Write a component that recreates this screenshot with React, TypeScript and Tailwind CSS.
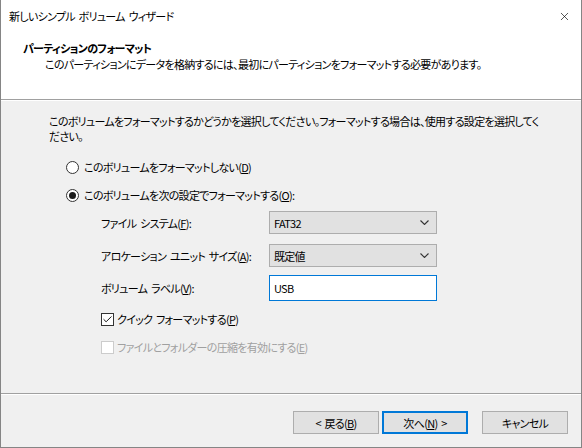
import { Check, X } from "lucide-react";

const font = {
  fontFamily: '"Noto Sans CJK JP", "Noto Sans", sans-serif',
  fontFeatureSettings: '"palt"',
  letterSpacing: "-0.7px",
  wordSpacing: "2px",
};

const Key = ({ k }: { k: string }) => (
  <>
    (<span className="underline">{k}</span>)
  </>
);

const Radio = ({ checked, children }: { checked?: boolean; children: React.ReactNode }) => (
  <div className="flex items-center h-4 pl-[17px]">
    <span className="w-[13px] h-[13px] rounded-full border border-[#333] bg-white flex items-center justify-center">
      {checked && <span className="w-[7px] h-[7px] rounded-full bg-[#1a1a1a]" />}
    </span>
    <span className="ml-[5px]">{children}</span>
  </div>
);

const Combo = ({ value }: { value: string }) => (
  <div className="w-[168px] h-[23px] bg-[#e1e1e1] border border-[#adadad] flex items-center justify-between pl-[4px] pr-[7px]">
    <span>{value}</span>
    <svg width="9" height="5" viewBox="0 0 9 5" className="text-[#333]">
      <polyline points="0.5,0.5 4.5,4.5 8.5,0.5" fill="none" stroke="currentColor" strokeWidth="1.1" />
    </svg>
  </div>
);

const Button = ({ children, primary }: { children: React.ReactNode; primary?: boolean }) => (
  <div
    className={
      "w-[86px] h-[23px] bg-[#e1e1e1] flex items-center justify-center " +
      (primary ? "border-2 border-[#0078d7]" : "border border-[#adadad]")
    }
  >
    {children}
  </div>
);

export default function App() {
  return (
    <div
      className="w-[582px] h-[448px] bg-[#f0f0f0] border-l border-r border-b border-[#858585] flex flex-col text-[11px] leading-4 text-black whitespace-nowrap"
      style={font}
    >
      {/* title bar + header */}
      <div className="bg-white h-[99px] flex flex-col">
        <div className="h-[32px] flex items-center justify-between pl-[8px] pr-[10px]">
          <span>新しいシンプル ボリューム ウィザード</span>
          <X className="w-[13px] h-[13px]" strokeWidth={1.2} />
        </div>
        <div className="pl-[22px] pt-[8px]">
          <div className="font-bold">パーティションのフォーマット</div>
          <div className="pl-[22px]">
            このパーティションにデータを格納するには、最初にパーティションをフォーマットする必要があります。
          </div>
        </div>
      </div>
      <div className="h-px bg-[#a0a0a0]" />
      <div className="h-px bg-white" />

      {/* body */}
      <div className="flex-1 pl-[48px] pt-[13px]">
        <div className="leading-[15px]">
          <div>
            このボリュームをフォーマットするかどうかを選択してください。フォーマットする場合は、使用する設定を選択してく
          </div>
          <div>ださい。</div>
        </div>
        <div className="mt-[15px]">
          <Radio>
            このボリュームをフォーマットしない<Key k="D" />
          </Radio>
        </div>
        <div className="mt-[12px]">
          <Radio checked>
            このボリュームを次の設定でフォーマットする<Key k="O" />:
          </Radio>
        </div>

        <div className="pl-[52px] mt-[8px] flex flex-col gap-[10px]">
          <div className="flex items-center">
            <span className="w-[168px]">
              ファイル システム<Key k="F" />:
            </span>
            <Combo value="FAT32" />
          </div>
          <div className="flex items-center">
            <span className="w-[168px]">
              アロケーション ユニット サイズ<Key k="A" />:
            </span>
            <Combo value="既定値" />
          </div>
          <div className="flex items-center mt-[-2px]">
            <span className="w-[168px]">
              ボリューム ラベル<Key k="V" />:
            </span>
            <div className="w-[168px] h-[26px] bg-white border border-[#0078d7] flex items-center pl-[4px]">
              USB
            </div>
          </div>

          <div className="flex items-center h-4">
            <span className="w-[13px] h-[13px] border border-[#333] bg-white flex items-center justify-center">
              <Check className="w-[11px] h-[11px]" strokeWidth={2} />
            </span>
            <span className="ml-[3px]">
              クイック フォーマットする<Key k="P" />
            </span>
          </div>
          <div className="flex items-center h-4 mt-[2px] text-[#a0a0a0]">
            <span className="w-[13px] h-[13px] border border-[#cccccc] bg-white" />
            <span className="ml-[3px]">
              ファイルとフォルダーの圧縮を有効にする<Key k="E" />
            </span>
          </div>
        </div>
      </div>

      {/* footer */}
      <div className="h-px bg-[#a0a0a0]" />
      <div className="h-px bg-white" />
      <div className="h-[52px] flex items-start justify-end pt-[16px] pr-[13px]">
        <Button>
          &lt; 戻る<Key k="B" />
        </Button>
        <div className="ml-[3px]">
          <Button primary>
            次へ<Key k="N" /> &gt;
          </Button>
        </div>
        <div className="ml-[14px]">
          <Button>キャンセル</Button>
        </div>
      </div>
    </div>
  );
}
